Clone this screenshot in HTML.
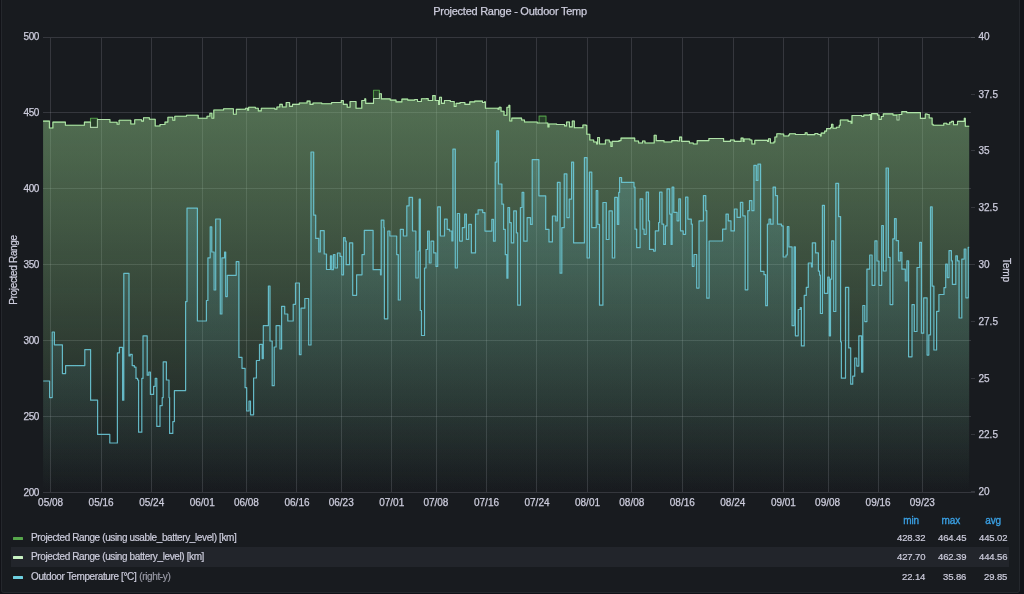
<!DOCTYPE html>
<html><head><meta charset="utf-8"><style>
div,svg{will-change:transform;}
html,body{margin:0;padding:0;background:#111217;width:1024px;height:594px;overflow:hidden;font-family:"Liberation Sans",sans-serif;}
.panel{position:absolute;left:1px;top:-6px;width:1017px;height:597px;background:#181b1f;border:1px solid rgba(204,204,220,0.07);border-radius:3px;}
.title{position:absolute;left:0;width:1020px;top:4px;text-align:center;color:#ccccdc;font-size:11px;letter-spacing:-0.25px;-webkit-text-stroke:0.25px #ccccdc;line-height:14px;}
.lg{position:absolute;left:11px;width:998px;height:19.5px;font-size:10px;color:#ccccdc;line-height:19.5px;}
.lg.hl{background:#22252b;height:19.7px;}
.ic{position:absolute;left:2px;top:9px;width:10.3px;height:3px;border-radius:0.5px;}
.lt{position:absolute;left:20px;top:0;white-space:nowrap;letter-spacing:-0.38px;-webkit-text-stroke:0.2px #ccccdc;}
.rt{color:rgba(204,204,220,0.65);-webkit-text-stroke:0.2px rgba(204,204,220,0.65);margin-left:3px;}
.v{position:absolute;top:0;text-align:right;white-space:nowrap;letter-spacing:-0.1px;font-size:9.5px;-webkit-text-stroke:0.2px #ccccdc;}
.hd{position:absolute;top:513.5px;font-size:10px;font-weight:normal;-webkit-text-stroke:0.35px #3a9fe2;color:#3a9fe2;line-height:14px;letter-spacing:-0.15px;}
</style></head><body>
<div class="panel"></div>
<div class="title">Projected Range - Outdoor Temp</div>
<svg width="1024" height="594" viewBox="0 0 1024 594" style="position:absolute;left:0;top:0">
<defs>
<linearGradient id="gg" gradientUnits="userSpaceOnUse" x1="0" y1="37" x2="0" y2="492"><stop offset="0" stop-color="#56a64b" stop-opacity="0.31"/><stop offset="1" stop-color="#56a64b" stop-opacity="0.0"/></linearGradient>
<linearGradient id="gl" gradientUnits="userSpaceOnUse" x1="0" y1="37" x2="0" y2="492"><stop offset="0" stop-color="#c8f2c2" stop-opacity="0.31"/><stop offset="1" stop-color="#c8f2c2" stop-opacity="0.0"/></linearGradient>
<linearGradient id="gc" gradientUnits="userSpaceOnUse" x1="0" y1="37" x2="0" y2="492"><stop offset="0" stop-color="#6ed0e0" stop-opacity="0.3"/><stop offset="1" stop-color="#6ed0e0" stop-opacity="0.0"/></linearGradient>
</defs>
<line x1="43" x2="975" y1="37.5" y2="37.5" stroke="rgba(204,204,220,0.16)" stroke-width="1"/>
<line x1="43" x2="971" y1="112.5" y2="112.5" stroke="rgba(204,204,220,0.16)" stroke-width="1"/>
<line x1="43" x2="971" y1="188.5" y2="188.5" stroke="rgba(204,204,220,0.16)" stroke-width="1"/>
<line x1="43" x2="971" y1="264.5" y2="264.5" stroke="rgba(204,204,220,0.16)" stroke-width="1"/>
<line x1="43" x2="971" y1="340.5" y2="340.5" stroke="rgba(204,204,220,0.16)" stroke-width="1"/>
<line x1="43" x2="971" y1="416.5" y2="416.5" stroke="rgba(204,204,220,0.16)" stroke-width="1"/>
<line x1="43" x2="975" y1="492.5" y2="492.5" stroke="rgba(204,204,220,0.16)" stroke-width="1"/>
<line x1="50.5" x2="50.5" y1="38" y2="492" stroke="rgba(204,204,220,0.16)" stroke-width="1"/>
<line x1="101.5" x2="101.5" y1="38" y2="492" stroke="rgba(204,204,220,0.16)" stroke-width="1"/>
<line x1="151.5" x2="151.5" y1="38" y2="492" stroke="rgba(204,204,220,0.16)" stroke-width="1"/>
<line x1="202.5" x2="202.5" y1="38" y2="492" stroke="rgba(204,204,220,0.16)" stroke-width="1"/>
<line x1="246.5" x2="246.5" y1="38" y2="492" stroke="rgba(204,204,220,0.16)" stroke-width="1"/>
<line x1="296.5" x2="296.5" y1="38" y2="492" stroke="rgba(204,204,220,0.16)" stroke-width="1"/>
<line x1="341.5" x2="341.5" y1="38" y2="492" stroke="rgba(204,204,220,0.16)" stroke-width="1"/>
<line x1="391.5" x2="391.5" y1="38" y2="492" stroke="rgba(204,204,220,0.16)" stroke-width="1"/>
<line x1="436.5" x2="436.5" y1="38" y2="492" stroke="rgba(204,204,220,0.16)" stroke-width="1"/>
<line x1="486.5" x2="486.5" y1="38" y2="492" stroke="rgba(204,204,220,0.16)" stroke-width="1"/>
<line x1="536.5" x2="536.5" y1="38" y2="492" stroke="rgba(204,204,220,0.16)" stroke-width="1"/>
<line x1="587.5" x2="587.5" y1="38" y2="492" stroke="rgba(204,204,220,0.16)" stroke-width="1"/>
<line x1="631.5" x2="631.5" y1="38" y2="492" stroke="rgba(204,204,220,0.16)" stroke-width="1"/>
<line x1="682.5" x2="682.5" y1="38" y2="492" stroke="rgba(204,204,220,0.16)" stroke-width="1"/>
<line x1="733.5" x2="733.5" y1="38" y2="492" stroke="rgba(204,204,220,0.16)" stroke-width="1"/>
<line x1="783.5" x2="783.5" y1="38" y2="492" stroke="rgba(204,204,220,0.16)" stroke-width="1"/>
<line x1="828.5" x2="828.5" y1="38" y2="492" stroke="rgba(204,204,220,0.16)" stroke-width="1"/>
<line x1="878.5" x2="878.5" y1="38" y2="492" stroke="rgba(204,204,220,0.16)" stroke-width="1"/>
<line x1="922.5" x2="922.5" y1="38" y2="492" stroke="rgba(204,204,220,0.16)" stroke-width="1"/>
<line x1="971" x2="975" y1="37.5" y2="37.5" stroke="rgba(204,204,220,0.16)" stroke-width="1"/>
<line x1="971" x2="975" y1="94.5" y2="94.5" stroke="rgba(204,204,220,0.16)" stroke-width="1"/>
<line x1="971" x2="975" y1="150.5" y2="150.5" stroke="rgba(204,204,220,0.16)" stroke-width="1"/>
<line x1="971" x2="975" y1="207.5" y2="207.5" stroke="rgba(204,204,220,0.16)" stroke-width="1"/>
<line x1="971" x2="975" y1="264.5" y2="264.5" stroke="rgba(204,204,220,0.16)" stroke-width="1"/>
<line x1="971" x2="975" y1="321.5" y2="321.5" stroke="rgba(204,204,220,0.16)" stroke-width="1"/>
<line x1="971" x2="975" y1="378.5" y2="378.5" stroke="rgba(204,204,220,0.16)" stroke-width="1"/>
<line x1="971" x2="975" y1="434.5" y2="434.5" stroke="rgba(204,204,220,0.16)" stroke-width="1"/>
<line x1="971" x2="975" y1="491.5" y2="491.5" stroke="rgba(204,204,220,0.16)" stroke-width="1"/>
<path d="M43.1,121.1H49.4V128.0H52.9V122.1H65.4V125.2H84.4V122.1H90.5V118.3H97.4V119.5H97.4V119.5H109.9V122.3H117.1V124.2H119.1V120.2H130.8V124.0H134.7V119.8H141.6V121.1H143.5V117.8H149.4V119.2H155.2V126.0H160.0V124.5H165.0V122.1H167.9V117.2H172.8V120.2H174.8V116.2H186.5V115.3H198.2V118.2H207.0V116.2H209.9V113.3H211.9V118.2H213.8V110.0H223.6V108.8H233.4V114.3H236.3V109.4H239.8V109.3H245.6V108.3H247.6V110.3H248.6V107.3H255.4V108.3H258.3V110.9H261.3V108.3H274.9V109.3H276.9V107.0H279.8V104.4H282.3V107.0H286.2V102.5H289.6V106.4H292.5V104.4H299.3V103.0H307.1V101.1H310.0V104.4H313.0V103.0H321.8V103.8H331.6V102.5H341.3V100.5H343.3V104.4H347.2V107.3H350.1V101.5H356.0V108.3H361.8V100.5H364.8V98.9H365.7V103.4H373.5V90.2H379.4V93.7H379.4V93.7H381.4V98.9H390.2V100.1H396.0V101.9H401.9V99.1H407.7V100.1H414.6V99.5H417.5V101.5H421.4V98.8H426.3V98.6H428.2V100.5H432.7V95.6H435.2V100.5H438.6V104.4H439.5V97.2H441.5V103.4H444.4V100.5H450.3V101.5H454.2V106.4H456.1V103.4H460.0V102.5H464.9V104.4H469.8V101.9H474.7V101.1H482.5V102.5H484.5V101.9H485.4V108.3H498.0V109.3H499.1V107.3H501.0V111.2H504.0V115.2H506.9V107.3H508.9V105.4H509.8V121.0H511.8V118.1H521.6V120.0H524.5V122.0H537.2V123.0H539.1V116.1H546.0V123.0H547.9V126.9H549.0V124.0H556.7V124.5H564.5V125.9H566.5V122.0H569.5V126.9H572.3V121.0H574.3V127.8H582.9V125.0H585.9V125.4H586.8V134.2H589.8V140.0H593.7V142.0H596.6V144.0H597.6V137.5H599.5V144.0H605.4V140.0H609.3V142.0H610.9V146.5H612.2V141.4H619.0V140.6H621.0V138.1H634.7V141.0H638.6V143.0H642.5V141.0H645.0V143.0H654.2V135.2H656.2V140.6H664.0V142.0H671.8V140.6H677.7V141.0H679.6V137.1H681.6V141.4H689.4V143.0H693.3V144.0H697.2V140.6H708.9V138.5H723.6V141.4H730.4V140.0H734.3V141.4H741.1V138.1H743.1V141.4H744.1V139.0H749.9V140.0H751.9V144.0H754.8V140.4H767.5V141.4H768.5V138.7H770.4V143.0H773.9V141.9H774.9V137.0H776.8V133.7H780.7V134.0H783.7V136.0H788.6V135.0H789.5V133.7H795.4V134.5H805.2V132.7H807.1V134.6H814.9V133.5H817.9V134.5H820.4V136.0H821.2V133.1H824.7V131.1H826.6V128.6H830.5V127.8H831.5V124.3H832.9V128.2H836.4V127.2H839.3V125.3H840.3V120.0H848.1V121.4H851.1V123.3H852.0V115.5H861.8V116.5H863.8V115.1H869.6V114.5H870.6V119.4H871.6V113.6H877.4V115.1H879.0V119.4H881.3V116.5H883.3V113.9H893.0V115.1H897.0V114.5H899.0V114.5H899.0V114.5H901.8V111.6H906.7V112.6H920.4V118.4H925.3V114.0H927.2V114.5H929.2V118.0H932.1V124.3H933.1V125.3H943.8V123.3H946.8V124.3H949.7V122.3H951.6V121.4H953.5V124.7H957.5V121.4H964.3V118.4H965.3V126.2H969.2V491.7H43.1Z" fill="url(#gg)"/>
<path d="M43.1,121.1H49.4V128.0H52.9V122.1H65.4V125.2H84.4V122.1H90.5V127.4H97.4V119.5H109.9V122.3H117.1V124.2H119.1V120.2H130.8V124.0H134.7V119.8H141.6V121.1H143.5V117.8H149.4V119.2H155.2V126.0H160.0V124.5H165.0V122.1H167.9V117.2H172.8V120.2H174.8V116.2H186.5V115.3H198.2V118.2H207.0V116.2H209.9V113.3H211.9V118.2H213.8V110.0H223.6V108.8H233.4V114.3H236.3V109.4H239.8V109.3H245.6V108.3H247.6V110.3H248.6V107.3H255.4V108.3H258.3V110.9H261.3V108.3H274.9V109.3H276.9V107.0H279.8V104.4H282.3V107.0H286.2V102.5H289.6V106.4H292.5V104.4H299.3V103.0H307.1V101.1H310.0V104.4H313.0V103.0H321.8V103.8H331.6V102.5H341.3V100.5H343.3V104.4H347.2V107.3H350.1V101.5H356.0V108.3H361.8V100.5H364.8V98.9H365.7V103.4H373.5V98.5H379.4V93.7H381.4V98.9H390.2V100.1H396.0V101.9H401.9V99.1H407.7V100.1H414.6V99.5H417.5V101.5H421.4V98.8H426.3V98.6H428.2V100.5H432.7V95.6H435.2V100.5H438.6V104.4H439.5V97.2H441.5V103.4H444.4V100.5H450.3V101.5H454.2V106.4H456.1V103.4H460.0V102.5H464.9V104.4H469.8V101.9H474.7V101.1H482.5V102.5H484.5V101.9H485.4V108.3H498.0V109.3H499.1V107.3H501.0V111.2H504.0V115.2H506.9V107.3H508.9V105.4H509.8V121.0H511.8V118.1H521.6V120.0H524.5V122.0H537.2V123.0H547.9V126.9H549.0V124.0H556.7V124.5H564.5V125.9H566.5V122.0H569.5V126.9H572.3V121.0H574.3V127.8H582.9V125.0H585.9V125.4H586.8V134.2H589.8V140.0H593.7V142.0H596.6V144.0H597.6V137.5H599.5V144.0H605.4V140.0H609.3V142.0H610.9V146.5H612.2V141.4H619.0V140.6H621.0V138.1H634.7V141.0H638.6V143.0H642.5V141.0H645.0V143.0H654.2V135.2H656.2V140.6H664.0V142.0H671.8V140.6H677.7V141.0H679.6V137.1H681.6V141.4H689.4V143.0H693.3V144.0H697.2V140.6H708.9V138.5H723.6V141.4H730.4V140.0H734.3V141.4H741.1V138.1H743.1V141.4H744.1V139.0H749.9V140.0H751.9V144.0H754.8V140.4H767.5V141.4H768.5V138.7H770.4V143.0H773.9V141.9H774.9V137.0H776.8V133.7H780.7V134.0H783.7V136.0H788.6V135.0H789.5V133.7H795.4V134.5H805.2V132.7H807.1V134.6H814.9V133.5H817.9V134.5H820.4V136.0H821.2V133.1H824.7V131.1H826.6V128.6H830.5V127.8H831.5V124.3H832.9V128.2H836.4V127.2H839.3V125.3H840.3V120.0H848.1V121.4H851.1V123.3H852.0V115.5H861.8V116.5H863.8V115.1H869.6V114.5H870.6V119.4H871.6V113.6H877.4V115.1H879.0V119.4H881.3V116.5H883.3V113.9H893.0V115.1H897.0V120.0H899.0V114.5H901.8V111.6H906.7V112.6H920.4V118.4H925.3V114.0H927.2V114.5H929.2V118.0H932.1V124.3H933.1V125.3H943.8V123.3H946.8V124.3H949.7V122.3H951.6V121.4H953.5V124.7H957.5V121.4H964.3V118.4H965.3V126.2H969.2V491.7H43.1Z" fill="url(#gl)"/>
<path d="M43.2,381.0H49.6V397.6H52.2V332.0H54.4V344.8H62.4V373.6H65.6V365.6H84.8V349.6H90.6V400.2H97.6V434.4H109.8V443.0H117.4V352.8H119.4V347.4H122.6V400.2H123.8V273.4H129.0V356.0H130.2V354.4H132.2V365.6H134.4V367.2H136.0V378.4H137.6V380.0H138.6V432.2H141.8V378.4H143.0V335.8H147.2V375.2H148.8V372.0H150.4V394.4H153.6V386.4H155.2V378.4H156.8V426.4H160.0V405.6H162.2V397.6H163.2V361.8H166.4V380.0H169.0V397.6H169.6V433.4H172.8V421.6H174.4V390.6H185.6V301.6H187.0V208.2H197.4V321.0H206.4V300.5H207.9V257.8H210.2V226.8H211.8V252.0H214.1V290.0H215.7V219.0H220.3V314.0H221.9V257.8H224.6V252.0H225.7V296.6H227.3V275.3H236.2V261.7H238.9V357.4H242.0V368.3H245.1V387.7H246.7V411.0H249.0V401.0H250.5V414.8H253.6V378.0H256.4V360.5H259.5V344.3H262.2V358.6H263.3V325.7H268.4V286.0H270.0V341.0H272.2V385.7H274.2V347.0H276.1V325.7H280.0V349.0H281.6V306.3H284.7V314.0H287.8V321.0H293.2V304.3H295.5V283.0H299.4V354.7H301.0V308.2H304.8V298.5H308.7V345.0H311.0V152.0H313.7V215.2H315.7V238.4H318.8V252.0H320.3V230.7H324.2V254.0H326.5V269.5H330.4V255.9H331.7V269.7H333.4V254.6H335.0V268.0H337.4V253.0H340.1V256.3H341.8V274.8H343.5V237.7H345.2V241.1H346.2V264.7H349.5V242.8H352.7V295.3H356.6V274.8H362.0V254.6H364.3V230.3H373.1V269.7H380.5V274.8H381.2V220.2H383.9V227.6H384.4V318.8H387.8V231.0H389.9V236.0H396.7V254.6H398.3V300.0H400.3V229.3H403.4V236.0H406.8V205.8H409.1V197.3H412.5V231.0H415.9V278.0H418.2V251.0H419.2V199.0H420.3V310.5H421.5V335.5H424.5V268.0H426.0V249.5H427.6V231.0H429.3V263.0H431.0V241.1H433.7V252.9H436.0V266.4H437.7V206.8H440.4V236.0H444.5V219.2H447.2V229.3H449.5V231.0H451.9V241.0H452.9V149.2H455.3V268.0H457.3V213.5H459.6V241.1H462.3V227.6H464.7V214.2H466.4V239.4H468.7V224.3H471.4V252.9H475.5V214.2H478.1V209.8H482.7V212.6H485.0V231.1H491.8V219.3H493.5V241.2H495.2V162.1H496.8V130.8H498.5V184.0H501.9V204.2H503.6V229.4H505.3V254.7H506.9V278.2H507.9V207.5H509.6V222.7H511.3V242.9H513.7V210.9H516.4V232.8H517.7V305.2H520.4V207.5H522.1V192.4H523.8V241.2H527.1V217.6H530.5V224.4H532.2V159.7H538.9V195.8H545.7V229.4H549.0V241.9H552.4V216.0H555.8V221.0H557.4V182.3H560.1V273.2H561.8V227.7H564.2V173.9H566.9V217.6H569.2V199.1H571.6V162.1H573.6V242.9H584.4V157.7H587.1V258.0H589.4V172.2H591.8V227.7H596.2V190.7H597.8V224.4H599.5V305.2H602.9V202.5H606.3V239.5H609.0V210.9H612.3V258.0H614.7V197.4H617.4V224.4H618.7V192.4H619.6V177.5H621.6V182.4H634.0V187.1H635.0V229.2H636.7V247.7H640.1V198.9H642.8V229.2H644.1V234.3H646.2V192.2H648.5V220.8H649.5V249.4H653.6V251.1H655.3V230.9H658.6V222.5H659.6V192.2H662.0V224.2H663.7V244.4H665.4V225.9H667.0V188.8H669.7V214.1H671.1V244.4H672.1V187.1H673.8V212.4H677.1V220.8H678.8V198.9H680.5V230.9H683.2V234.3H685.6V197.2H687.9V219.1H691.3V224.2H692.3V266.3H694.0V254.5H696.7V288.1H699.0V220.8H703.4V195.6H705.8V210.7H706.8V298.2H709.1V241.0H722.6V229.2H726.0V214.1H728.3V220.8H731.0V230.9H734.4V209.0H737.1V217.4H740.4V202.3H742.8V215.8H745.2V289.8H747.8V210.7H749.5V200.6H751.9V210.7H753.9V165.3H756.3V180.4H757.9V164.2H760.6V271.3H764.0V274.7H765.7V305.7H767.4V224.2H769.0V219.1H770.7V224.2H773.1V187.1H775.5V195.6H777.5V224.2H781.5V225.9H783.2V257.0H786.0V255.0H787.3V226.7H788.9V246.9H792.1V325.7H794.1V246.9H795.4V335.8H798.2V309.5H800.2V307.5H801.4V345.9H804.2V295.4H806.3V287.3H808.3V263.0H811.5V267.0H812.3V242.8H815.6V252.9H818.4V271.1H819.6V275.2H820.4V313.5H822.4V205.3H824.4V293.3H827.7V277.2H829.3V335.8H830.5V279.2H831.7V240.8H833.7V311.5H835.8V183.4H838.6V216.6H840.6V341.8H841.4V378.2H845.5V287.3H848.7V347.9H850.7V384.2H852.7V376.2H854.7V358.0H856.8V366.1H858.8V335.8H861.6V372.1H862.8V305.5H864.8V321.6H866.9V269.1H869.7V255.0H872.1V285.3H874.9V240.8H877.0V261.0H879.0V285.3H881.7V225.5H883.4V271.0H886.1V168.0H888.4V257.4H890.1V304.6H892.8V238.9H894.5V218.7H896.2V240.6H898.5V260.8H900.2V252.4H901.9V269.2H905.3V281.0H906.9V260.8H908.6V356.8H912.0V304.6H914.3V331.5H917.0V267.5H919.7V242.3H921.4V333.2H923.7V297.8H927.1V355.1H928.8V334.9H930.5V206.9H932.2V286.1H933.9V350.0H936.6V311.3H938.9V294.5H944.0V287.7H945.7V264.2H947.3V277.6H949.0V250.7H951.4V260.8H952.4V284.4H955.8V255.8H957.4V260.8H959.1V318.0H961.8V259.1H964.2V249.0H965.9V297.8H968.2V247.3H969.2V491.7H43.2Z" fill="url(#gc)"/>
<path d="M43.1,121.1H49.4V128.0H52.9V122.1H65.4V125.2H84.4V122.1H90.5V118.3H97.4V119.5H97.4V119.5H109.9V122.3H117.1V124.2H119.1V120.2H130.8V124.0H134.7V119.8H141.6V121.1H143.5V117.8H149.4V119.2H155.2V126.0H160.0V124.5H165.0V122.1H167.9V117.2H172.8V120.2H174.8V116.2H186.5V115.3H198.2V118.2H207.0V116.2H209.9V113.3H211.9V118.2H213.8V110.0H223.6V108.8H233.4V114.3H236.3V109.4H239.8V109.3H245.6V108.3H247.6V110.3H248.6V107.3H255.4V108.3H258.3V110.9H261.3V108.3H274.9V109.3H276.9V107.0H279.8V104.4H282.3V107.0H286.2V102.5H289.6V106.4H292.5V104.4H299.3V103.0H307.1V101.1H310.0V104.4H313.0V103.0H321.8V103.8H331.6V102.5H341.3V100.5H343.3V104.4H347.2V107.3H350.1V101.5H356.0V108.3H361.8V100.5H364.8V98.9H365.7V103.4H373.5V90.2H379.4V93.7H379.4V93.7H381.4V98.9H390.2V100.1H396.0V101.9H401.9V99.1H407.7V100.1H414.6V99.5H417.5V101.5H421.4V98.8H426.3V98.6H428.2V100.5H432.7V95.6H435.2V100.5H438.6V104.4H439.5V97.2H441.5V103.4H444.4V100.5H450.3V101.5H454.2V106.4H456.1V103.4H460.0V102.5H464.9V104.4H469.8V101.9H474.7V101.1H482.5V102.5H484.5V101.9H485.4V108.3H498.0V109.3H499.1V107.3H501.0V111.2H504.0V115.2H506.9V107.3H508.9V105.4H509.8V121.0H511.8V118.1H521.6V120.0H524.5V122.0H537.2V123.0H539.1V116.1H546.0V123.0H547.9V126.9H549.0V124.0H556.7V124.5H564.5V125.9H566.5V122.0H569.5V126.9H572.3V121.0H574.3V127.8H582.9V125.0H585.9V125.4H586.8V134.2H589.8V140.0H593.7V142.0H596.6V144.0H597.6V137.5H599.5V144.0H605.4V140.0H609.3V142.0H610.9V146.5H612.2V141.4H619.0V140.6H621.0V138.1H634.7V141.0H638.6V143.0H642.5V141.0H645.0V143.0H654.2V135.2H656.2V140.6H664.0V142.0H671.8V140.6H677.7V141.0H679.6V137.1H681.6V141.4H689.4V143.0H693.3V144.0H697.2V140.6H708.9V138.5H723.6V141.4H730.4V140.0H734.3V141.4H741.1V138.1H743.1V141.4H744.1V139.0H749.9V140.0H751.9V144.0H754.8V140.4H767.5V141.4H768.5V138.7H770.4V143.0H773.9V141.9H774.9V137.0H776.8V133.7H780.7V134.0H783.7V136.0H788.6V135.0H789.5V133.7H795.4V134.5H805.2V132.7H807.1V134.6H814.9V133.5H817.9V134.5H820.4V136.0H821.2V133.1H824.7V131.1H826.6V128.6H830.5V127.8H831.5V124.3H832.9V128.2H836.4V127.2H839.3V125.3H840.3V120.0H848.1V121.4H851.1V123.3H852.0V115.5H861.8V116.5H863.8V115.1H869.6V114.5H870.6V119.4H871.6V113.6H877.4V115.1H879.0V119.4H881.3V116.5H883.3V113.9H893.0V115.1H897.0V114.5H899.0V114.5H899.0V114.5H901.8V111.6H906.7V112.6H920.4V118.4H925.3V114.0H927.2V114.5H929.2V118.0H932.1V124.3H933.1V125.3H943.8V123.3H946.8V124.3H949.7V122.3H951.6V121.4H953.5V124.7H957.5V121.4H964.3V118.4H965.3V126.2H969.2" fill="none" stroke="#56a64b" stroke-opacity="0.9" stroke-width="1.1" stroke-linejoin="round"/>
<path d="M43.1,121.1H49.4V128.0H52.9V122.1H65.4V125.2H84.4V122.1H90.5V127.4H97.4V119.5H109.9V122.3H117.1V124.2H119.1V120.2H130.8V124.0H134.7V119.8H141.6V121.1H143.5V117.8H149.4V119.2H155.2V126.0H160.0V124.5H165.0V122.1H167.9V117.2H172.8V120.2H174.8V116.2H186.5V115.3H198.2V118.2H207.0V116.2H209.9V113.3H211.9V118.2H213.8V110.0H223.6V108.8H233.4V114.3H236.3V109.4H239.8V109.3H245.6V108.3H247.6V110.3H248.6V107.3H255.4V108.3H258.3V110.9H261.3V108.3H274.9V109.3H276.9V107.0H279.8V104.4H282.3V107.0H286.2V102.5H289.6V106.4H292.5V104.4H299.3V103.0H307.1V101.1H310.0V104.4H313.0V103.0H321.8V103.8H331.6V102.5H341.3V100.5H343.3V104.4H347.2V107.3H350.1V101.5H356.0V108.3H361.8V100.5H364.8V98.9H365.7V103.4H373.5V98.5H379.4V93.7H381.4V98.9H390.2V100.1H396.0V101.9H401.9V99.1H407.7V100.1H414.6V99.5H417.5V101.5H421.4V98.8H426.3V98.6H428.2V100.5H432.7V95.6H435.2V100.5H438.6V104.4H439.5V97.2H441.5V103.4H444.4V100.5H450.3V101.5H454.2V106.4H456.1V103.4H460.0V102.5H464.9V104.4H469.8V101.9H474.7V101.1H482.5V102.5H484.5V101.9H485.4V108.3H498.0V109.3H499.1V107.3H501.0V111.2H504.0V115.2H506.9V107.3H508.9V105.4H509.8V121.0H511.8V118.1H521.6V120.0H524.5V122.0H537.2V123.0H547.9V126.9H549.0V124.0H556.7V124.5H564.5V125.9H566.5V122.0H569.5V126.9H572.3V121.0H574.3V127.8H582.9V125.0H585.9V125.4H586.8V134.2H589.8V140.0H593.7V142.0H596.6V144.0H597.6V137.5H599.5V144.0H605.4V140.0H609.3V142.0H610.9V146.5H612.2V141.4H619.0V140.6H621.0V138.1H634.7V141.0H638.6V143.0H642.5V141.0H645.0V143.0H654.2V135.2H656.2V140.6H664.0V142.0H671.8V140.6H677.7V141.0H679.6V137.1H681.6V141.4H689.4V143.0H693.3V144.0H697.2V140.6H708.9V138.5H723.6V141.4H730.4V140.0H734.3V141.4H741.1V138.1H743.1V141.4H744.1V139.0H749.9V140.0H751.9V144.0H754.8V140.4H767.5V141.4H768.5V138.7H770.4V143.0H773.9V141.9H774.9V137.0H776.8V133.7H780.7V134.0H783.7V136.0H788.6V135.0H789.5V133.7H795.4V134.5H805.2V132.7H807.1V134.6H814.9V133.5H817.9V134.5H820.4V136.0H821.2V133.1H824.7V131.1H826.6V128.6H830.5V127.8H831.5V124.3H832.9V128.2H836.4V127.2H839.3V125.3H840.3V120.0H848.1V121.4H851.1V123.3H852.0V115.5H861.8V116.5H863.8V115.1H869.6V114.5H870.6V119.4H871.6V113.6H877.4V115.1H879.0V119.4H881.3V116.5H883.3V113.9H893.0V115.1H897.0V120.0H899.0V114.5H901.8V111.6H906.7V112.6H920.4V118.4H925.3V114.0H927.2V114.5H929.2V118.0H932.1V124.3H933.1V125.3H943.8V123.3H946.8V124.3H949.7V122.3H951.6V121.4H953.5V124.7H957.5V121.4H964.3V118.4H965.3V126.2H969.2" fill="none" stroke="#c8f2c2" stroke-opacity="0.8" stroke-width="1.1" stroke-linejoin="round"/>
<path d="M43.2,381.0H49.6V397.6H52.2V332.0H54.4V344.8H62.4V373.6H65.6V365.6H84.8V349.6H90.6V400.2H97.6V434.4H109.8V443.0H117.4V352.8H119.4V347.4H122.6V400.2H123.8V273.4H129.0V356.0H130.2V354.4H132.2V365.6H134.4V367.2H136.0V378.4H137.6V380.0H138.6V432.2H141.8V378.4H143.0V335.8H147.2V375.2H148.8V372.0H150.4V394.4H153.6V386.4H155.2V378.4H156.8V426.4H160.0V405.6H162.2V397.6H163.2V361.8H166.4V380.0H169.0V397.6H169.6V433.4H172.8V421.6H174.4V390.6H185.6V301.6H187.0V208.2H197.4V321.0H206.4V300.5H207.9V257.8H210.2V226.8H211.8V252.0H214.1V290.0H215.7V219.0H220.3V314.0H221.9V257.8H224.6V252.0H225.7V296.6H227.3V275.3H236.2V261.7H238.9V357.4H242.0V368.3H245.1V387.7H246.7V411.0H249.0V401.0H250.5V414.8H253.6V378.0H256.4V360.5H259.5V344.3H262.2V358.6H263.3V325.7H268.4V286.0H270.0V341.0H272.2V385.7H274.2V347.0H276.1V325.7H280.0V349.0H281.6V306.3H284.7V314.0H287.8V321.0H293.2V304.3H295.5V283.0H299.4V354.7H301.0V308.2H304.8V298.5H308.7V345.0H311.0V152.0H313.7V215.2H315.7V238.4H318.8V252.0H320.3V230.7H324.2V254.0H326.5V269.5H330.4V255.9H331.7V269.7H333.4V254.6H335.0V268.0H337.4V253.0H340.1V256.3H341.8V274.8H343.5V237.7H345.2V241.1H346.2V264.7H349.5V242.8H352.7V295.3H356.6V274.8H362.0V254.6H364.3V230.3H373.1V269.7H380.5V274.8H381.2V220.2H383.9V227.6H384.4V318.8H387.8V231.0H389.9V236.0H396.7V254.6H398.3V300.0H400.3V229.3H403.4V236.0H406.8V205.8H409.1V197.3H412.5V231.0H415.9V278.0H418.2V251.0H419.2V199.0H420.3V310.5H421.5V335.5H424.5V268.0H426.0V249.5H427.6V231.0H429.3V263.0H431.0V241.1H433.7V252.9H436.0V266.4H437.7V206.8H440.4V236.0H444.5V219.2H447.2V229.3H449.5V231.0H451.9V241.0H452.9V149.2H455.3V268.0H457.3V213.5H459.6V241.1H462.3V227.6H464.7V214.2H466.4V239.4H468.7V224.3H471.4V252.9H475.5V214.2H478.1V209.8H482.7V212.6H485.0V231.1H491.8V219.3H493.5V241.2H495.2V162.1H496.8V130.8H498.5V184.0H501.9V204.2H503.6V229.4H505.3V254.7H506.9V278.2H507.9V207.5H509.6V222.7H511.3V242.9H513.7V210.9H516.4V232.8H517.7V305.2H520.4V207.5H522.1V192.4H523.8V241.2H527.1V217.6H530.5V224.4H532.2V159.7H538.9V195.8H545.7V229.4H549.0V241.9H552.4V216.0H555.8V221.0H557.4V182.3H560.1V273.2H561.8V227.7H564.2V173.9H566.9V217.6H569.2V199.1H571.6V162.1H573.6V242.9H584.4V157.7H587.1V258.0H589.4V172.2H591.8V227.7H596.2V190.7H597.8V224.4H599.5V305.2H602.9V202.5H606.3V239.5H609.0V210.9H612.3V258.0H614.7V197.4H617.4V224.4H618.7V192.4H619.6V177.5H621.6V182.4H634.0V187.1H635.0V229.2H636.7V247.7H640.1V198.9H642.8V229.2H644.1V234.3H646.2V192.2H648.5V220.8H649.5V249.4H653.6V251.1H655.3V230.9H658.6V222.5H659.6V192.2H662.0V224.2H663.7V244.4H665.4V225.9H667.0V188.8H669.7V214.1H671.1V244.4H672.1V187.1H673.8V212.4H677.1V220.8H678.8V198.9H680.5V230.9H683.2V234.3H685.6V197.2H687.9V219.1H691.3V224.2H692.3V266.3H694.0V254.5H696.7V288.1H699.0V220.8H703.4V195.6H705.8V210.7H706.8V298.2H709.1V241.0H722.6V229.2H726.0V214.1H728.3V220.8H731.0V230.9H734.4V209.0H737.1V217.4H740.4V202.3H742.8V215.8H745.2V289.8H747.8V210.7H749.5V200.6H751.9V210.7H753.9V165.3H756.3V180.4H757.9V164.2H760.6V271.3H764.0V274.7H765.7V305.7H767.4V224.2H769.0V219.1H770.7V224.2H773.1V187.1H775.5V195.6H777.5V224.2H781.5V225.9H783.2V257.0H786.0V255.0H787.3V226.7H788.9V246.9H792.1V325.7H794.1V246.9H795.4V335.8H798.2V309.5H800.2V307.5H801.4V345.9H804.2V295.4H806.3V287.3H808.3V263.0H811.5V267.0H812.3V242.8H815.6V252.9H818.4V271.1H819.6V275.2H820.4V313.5H822.4V205.3H824.4V293.3H827.7V277.2H829.3V335.8H830.5V279.2H831.7V240.8H833.7V311.5H835.8V183.4H838.6V216.6H840.6V341.8H841.4V378.2H845.5V287.3H848.7V347.9H850.7V384.2H852.7V376.2H854.7V358.0H856.8V366.1H858.8V335.8H861.6V372.1H862.8V305.5H864.8V321.6H866.9V269.1H869.7V255.0H872.1V285.3H874.9V240.8H877.0V261.0H879.0V285.3H881.7V225.5H883.4V271.0H886.1V168.0H888.4V257.4H890.1V304.6H892.8V238.9H894.5V218.7H896.2V240.6H898.5V260.8H900.2V252.4H901.9V269.2H905.3V281.0H906.9V260.8H908.6V356.8H912.0V304.6H914.3V331.5H917.0V267.5H919.7V242.3H921.4V333.2H923.7V297.8H927.1V355.1H928.8V334.9H930.5V206.9H932.2V286.1H933.9V350.0H936.6V311.3H938.9V294.5H944.0V287.7H945.7V264.2H947.3V277.6H949.0V250.7H951.4V260.8H952.4V284.4H955.8V255.8H957.4V260.8H959.1V318.0H961.8V259.1H964.2V249.0H965.9V297.8H968.2V247.3H969.2" fill="none" stroke="#6ed0e0" stroke-opacity="0.85" stroke-width="1.2" stroke-linejoin="round"/>
<g font-family="Liberation Sans, sans-serif" font-size="10px" fill="#ccccdc" stroke="#ccccdc" stroke-width="0.25">
<text x="39" y="36.5" text-anchor="end" dominant-baseline="central" letter-spacing="-0.4">500</text>
<text x="39" y="112.5" text-anchor="end" dominant-baseline="central" letter-spacing="-0.4">450</text>
<text x="39" y="188.5" text-anchor="end" dominant-baseline="central" letter-spacing="-0.4">400</text>
<text x="39" y="264.5" text-anchor="end" dominant-baseline="central" letter-spacing="-0.4">350</text>
<text x="39" y="340.5" text-anchor="end" dominant-baseline="central" letter-spacing="-0.4">300</text>
<text x="39" y="416.5" text-anchor="end" dominant-baseline="central" letter-spacing="-0.4">250</text>
<text x="39" y="492.5" text-anchor="end" dominant-baseline="central" letter-spacing="-0.4">200</text>
<text x="978.5" y="36.3" dominant-baseline="central">40</text>
<text x="978.5" y="94.1" dominant-baseline="central">37.5</text>
<text x="978.5" y="150.9" dominant-baseline="central">35</text>
<text x="978.5" y="207.7" dominant-baseline="central">32.5</text>
<text x="978.5" y="264.5" dominant-baseline="central">30</text>
<text x="978.5" y="321.3" dominant-baseline="central">27.5</text>
<text x="978.5" y="378.1" dominant-baseline="central">25</text>
<text x="978.5" y="434.9" dominant-baseline="central">22.5</text>
<text x="978.5" y="491.7" dominant-baseline="central">20</text>
<text x="50.6" y="502" text-anchor="middle" dominant-baseline="central">05/08</text>
<text x="101.1" y="502" text-anchor="middle" dominant-baseline="central">05/16</text>
<text x="151.7" y="502" text-anchor="middle" dominant-baseline="central">05/24</text>
<text x="202.2" y="502" text-anchor="middle" dominant-baseline="central">06/01</text>
<text x="246.4" y="502" text-anchor="middle" dominant-baseline="central">06/08</text>
<text x="297.0" y="502" text-anchor="middle" dominant-baseline="central">06/16</text>
<text x="341.2" y="502" text-anchor="middle" dominant-baseline="central">06/23</text>
<text x="391.7" y="502" text-anchor="middle" dominant-baseline="central">07/01</text>
<text x="435.9" y="502" text-anchor="middle" dominant-baseline="central">07/08</text>
<text x="486.5" y="502" text-anchor="middle" dominant-baseline="central">07/16</text>
<text x="537.0" y="502" text-anchor="middle" dominant-baseline="central">07/24</text>
<text x="587.5" y="502" text-anchor="middle" dominant-baseline="central">08/01</text>
<text x="631.8" y="502" text-anchor="middle" dominant-baseline="central">08/08</text>
<text x="682.3" y="502" text-anchor="middle" dominant-baseline="central">08/16</text>
<text x="732.8" y="502" text-anchor="middle" dominant-baseline="central">08/24</text>
<text x="783.4" y="502" text-anchor="middle" dominant-baseline="central">09/01</text>
<text x="827.6" y="502" text-anchor="middle" dominant-baseline="central">09/08</text>
<text x="878.1" y="502" text-anchor="middle" dominant-baseline="central">09/16</text>
<text x="922.3" y="502" text-anchor="middle" dominant-baseline="central">09/23</text>
<text transform="translate(13,270) rotate(-90)" text-anchor="middle" dominant-baseline="central" letter-spacing="-0.32">Projected Range</text>
<text transform="translate(1006.8,270) rotate(90)" text-anchor="middle" dominant-baseline="central" letter-spacing="-0.1">Temp</text>
</g>
</svg>
<div class="hd" style="left:895px;width:24px;text-align:right">min</div>
<div class="hd" style="left:930px;width:30px;text-align:right">max</div>
<div class="hd" style="left:970px;width:31px;text-align:right">avg</div>
<div class="lg" style="top:528px"><div class="ic" style="background:#56a64b"></div><div class="lt">Projected Range (using usable_battery_level) [km]</div><div class="v" style="right:83.5px">428.32</div><div class="v" style="right:42.5px">464.45</div><div class="v" style="right:1.5px">445.02</div></div>
<div class="lg hl" style="top:547.2px"><div class="ic" style="background:#c8f2c2"></div><div class="lt">Projected Range (using battery_level) [km]</div><div class="v" style="right:83.5px">427.70</div><div class="v" style="right:42.5px">462.39</div><div class="v" style="right:1.5px">444.56</div></div>
<div class="lg" style="top:567px"><div class="ic" style="background:#6ed0e0"></div><div class="lt">Outdoor Temperature [°C]<span class="rt">(right-y)</span></div><div class="v" style="right:83.5px">22.14</div><div class="v" style="right:42.5px">35.86</div><div class="v" style="right:1.5px">29.85</div></div>
</body></html>
